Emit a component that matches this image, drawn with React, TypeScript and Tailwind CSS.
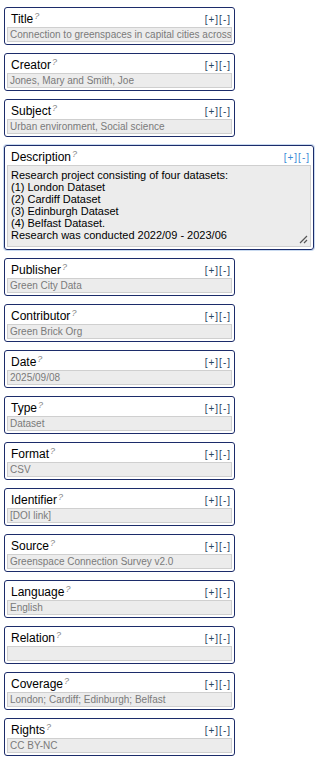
const FIELDS: { label: string; value: string }[] = [
  { label: "Title", value: "Connection to greenspaces in capital cities across" },
  { label: "Creator", value: "Jones, Mary and Smith, Joe" },
  { label: "Subject", value: "Urban environment, Social science" },
  { label: "Description", value: "" },
  { label: "Publisher", value: "Green City Data" },
  { label: "Contributor", value: "Green Brick Org" },
  { label: "Date", value: "2025/09/08" },
  { label: "Type", value: "Dataset" },
  { label: "Format", value: "CSV" },
  { label: "Identifier", value: "[DOI link]" },
  { label: "Source", value: "Greenspace Connection Survey v2.0" },
  { label: "Language", value: "English" },
  { label: "Relation", value: "" },
  { label: "Coverage", value: "London; Cardiff; Edinburgh; Belfast" },
  { label: "Rights", value: "CC BY-NC" },
];

const DESCRIPTION = [
  "Research project consisting of four datasets:",
  "(1) London Dataset",
  "(2) Cardiff Dataset",
  "(3) Edinburgh Dataset",
  "(4) Belfast Dataset.",
  "Research was conducted 2022/09 - 2023/06",
];

function Header({ label, active }: { label: string; active?: boolean }) {
  return (
    <div className="flex items-end justify-between h-[19px] pl-[4px] pr-[1px] pb-[1px]">
      <span className="text-[12px] leading-[14px] text-black">
        {label}
        <sup className="text-[9px] italic text-[#8a8a8a] ml-[1px]">?</sup>
      </span>
      <span
        className={
          "text-[10px] leading-[12px] tracking-[1px] " +
          (active ? "text-[#3a8ad6]" : "text-[#27465f]")
        }
      >
        [+][-]
      </span>
    </div>
  );
}

function ResizeGrip() {
  return (
    <svg width="9" height="9" viewBox="0 0 9 9" className="absolute right-[2px] bottom-[2px]">
      <path d="M1 8 L8 1 M5 8 L8 5" stroke="#555" strokeWidth="1.2" />
    </svg>
  );
}

export default function App() {
  return (
    <div
      className="min-h-screen bg-white pt-[7px] pl-[4px] flex flex-col gap-[8px]"
      style={{ fontFamily: '"Liberation Sans", Arial, sans-serif' }}
    >
      {FIELDS.map((f) =>
        f.label === "Description" ? (
          <div
            key={f.label}
            className="w-[310px] border border-[#1c2c6a] rounded-[3px] px-[2px] pb-[2px] shadow-[0_0_0_1px_#c9daf0]"
          >
            <Header label={f.label} active />
            <div className="relative h-[82px] bg-[#ececec] border border-[#cfcfcf] px-[3px] pt-[3px] text-[11px] leading-[12px] text-black">
              {DESCRIPTION.map((l) => (
                <div key={l}>{l}</div>
              ))}
              <ResizeGrip />
            </div>
          </div>
        ) : (
          <div key={f.label} className="w-[231px] border border-[#1c2c6a] rounded-[3px] px-[2px] pb-[2px]">
            <Header label={f.label} />
            <div className="h-[15px] bg-[#ececec] border border-[#cfcfcf] px-[2px] text-[10px] leading-[13px] text-[#7a7a7a] whitespace-nowrap overflow-hidden">
              {f.value}
            </div>
          </div>
        )
      )}
    </div>
  );
}
